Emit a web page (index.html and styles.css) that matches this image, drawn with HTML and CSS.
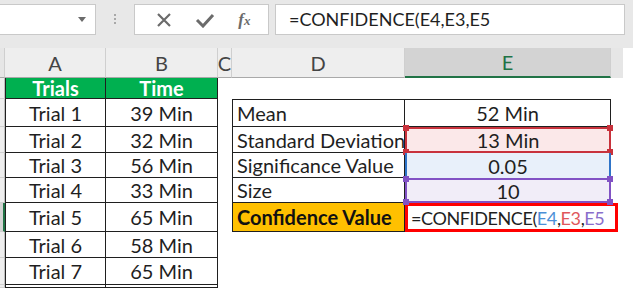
FILE: index.html
```html
<!DOCTYPE html>
<html lang="en">
<head>
  <meta charset="UTF-8" />
  <title>Confidence Value</title>
  <link rel="stylesheet" href="styles.css">
</head>
<body>
  <div class="topbar">
    <div class="namebox"><span class="caret"></span></div>
    <div class="grip"><i></i><i></i><i></i></div>
    <div class="buttons">
      <svg class="icon" width="16" height="16" viewBox="0 0 16 16"><path d="M2 2L14 14M14 2L2 14" stroke="#6b6b6b" stroke-width="2.2" fill="none"/></svg>
      <svg class="icon" width="20" height="16" viewBox="0 0 20 16"><path d="M2 8L8 14L18 3" stroke="#6b6b6b" stroke-width="3" fill="none"/></svg>
      <span class="fx">f<small>x</small></span>
    </div>
    <div class="formula">=CONFIDENCE(E4,E3,E5</div>
  </div>

  <div class="sheet">
    <!-- column headers -->
    <div class="ch corner"></div>
    <div class="ch">A</div>
    <div class="ch">B</div>
    <div class="ch">C</div>
    <div class="ch">D</div>
    <div class="ch selected">E</div>
    <div class="ch rest"></div>

    <div class="rh"></div>
    <div class="cell a head">Trials</div>
    <div class="cell b head">Time</div>
    <div class="cell"></div>
    <div class="cell"></div>
    <div class="cell"></div>

    <div class="rh"></div>
    <div class="cell a">Trial 1</div>
    <div class="cell b">39 Min</div>
    <div class="cell"></div>
    <div class="cell d first">Mean</div>
    <div class="cell e first">52 Min</div>

    <div class="rh"></div>
    <div class="cell a">Trial 2</div>
    <div class="cell b">32 Min</div>
    <div class="cell"></div>
    <div class="cell d">Standard Deviation</div>
    <div class="cell e ref-red">13 Min
      <span class="knob tl"></span><span class="knob tr"></span><span class="knob bl"></span><span class="knob br"></span>
    </div>

    <div class="rh"></div>
    <div class="cell a">Trial 3</div>
    <div class="cell b">56 Min</div>
    <div class="cell"></div>
    <div class="cell d">Significance Value</div>
    <div class="cell e ref-blue">0.05</div>

    <div class="rh"></div>
    <div class="cell a">Trial 4</div>
    <div class="cell b">33 Min</div>
    <div class="cell"></div>
    <div class="cell d">Size</div>
    <div class="cell e ref-purple">10
      <span class="knob tl"></span><span class="knob tr"></span><span class="knob bl"></span><span class="knob br"></span>
    </div>

    <div class="rh active"></div>
    <div class="cell a">Trial 5</div>
    <div class="cell b">65 Min</div>
    <div class="cell"></div>
    <div class="cell d label">Confidence Value</div>
    <div class="cell editing">=CONFIDENCE(<span class="r-blue">E4</span>,<span class="r-red">E3</span>,<span class="r-purple">E5</span></div>

    <div class="rh"></div>
    <div class="cell a">Trial 6</div>
    <div class="cell b">58 Min</div>

    <div class="rh"></div>
    <div class="cell a">Trial 7</div>
    <div class="cell b">65 Min</div>

    <div class="rh"></div>
    <div class="cell a"></div>
    <div class="cell b"></div>
  </div>
</body>
</html>
```

FILE: styles.css
```css
body {
  margin: 0;
  background-color: #ffffff;
  font-family: Lato, "Open Sans", sans-serif;
  color: #1f1f1f;
  width: 633px;
  height: 288px;
  overflow: hidden;
}

/* formula bar */
.topbar {
  height: 48px;
  background-color: #e8e8e8;
  display: flex;
  align-items: flex-start;
  padding-top: 4px;
  box-sizing: border-box;
}

.namebox,
.buttons,
.formula {
  height: 31px;
  background-color: #ffffff;
  border: 1px solid #c9c9c9;
  box-sizing: border-box;
}

.namebox {
  width: 97px;
  margin-left: -1px;
  position: relative;
}

.caret {
  position: absolute;
  right: 9px;
  top: 12px;
  border-left: 4px solid transparent;
  border-right: 4px solid transparent;
  border-top: 5px solid #6b6b6b;
}

.grip {
  width: 38px;
  display: flex;
  flex-direction: column;
  align-items: center;
  gap: 2px;
  padding-top: 10px;
}

.grip i {
  width: 2px;
  height: 2px;
  background-color: #a8a8a8;
}

.buttons {
  width: 135px;
  display: flex;
  align-items: center;
  justify-content: space-around;
  padding: 0 6px 0 10px;
}

.fx {
  font-family: "Liberation Serif", serif;
  font-style: italic;
  font-weight: bold;
  font-size: 17px;
  color: #6b6b6b;
}

.fx small {
  font-size: 13px;
}

.formula {
  width: 350px;
  margin-left: 6px;
  font-size: 18px;
  line-height: 29px;
  padding-left: 13px;
}

/* worksheet */
.sheet {
  display: grid;
  grid-template-columns: 5px 101px 112px 14px 173px 206px 1fr;
  grid-template-rows: 30px 21px 28px 26px 25px 25px 29px 26px 27px 3px;
}

.ch {
  background-color: #eeeeee;
  border-right: 1px solid #cfcfcf;
  border-bottom: 1px solid #a9a9a9;
  color: #444444;
  font-size: 20px;
  display: flex;
  align-items: center;
  justify-content: center;
}

.ch.corner {
  background-color: #e6e6e6;
}

.ch.selected {
  background-color: #d3d3d3;
  border-bottom: 2px solid #217346;
  color: #217346;
}

.ch.rest {
  border: none;
  background: linear-gradient(to right, #e6e6e6 12px, #ffffff 12px);
}

.rh {
  grid-column: 1;
  background-color: #eeeeee;
  border-bottom: 1px solid #cfcfcf;
  border-right: 1px solid #bdbdbd;
}

.rh.active {
  background-color: #d3d3d3;
  border-right: 2px solid #217346;
}

.cell {
  font-size: 20px;
  display: flex;
  align-items: center;
  justify-content: center;
  white-space: nowrap;
  box-sizing: border-box;
}

.cell.a {
  border-left: 1px solid #1f1f1f;
  border-right: 1px solid #1f1f1f;
  border-bottom: 1px solid #1f1f1f;
}

.cell.b {
  border-right: 1px solid #1f1f1f;
  border-bottom: 1px solid #1f1f1f;
}

.cell.head {
  background-color: #00b050;
  color: #ffffff;
  font-weight: bold;
}

.cell.d {
  justify-content: flex-start;
  padding-left: 4px;
  border-left: 1px solid #1f1f1f;
  border-right: 1px solid #1f1f1f;
  border-bottom: 1px solid #1f1f1f;
}

.cell.e {
  border-right: 1px solid #1f1f1f;
  border-bottom: 1px solid #1f1f1f;
  position: relative;
}

.cell.first {
  border-top: 1px solid #1f1f1f;
}

.cell.label {
  background-color: #ffc000;
  font-weight: bold;
  color: #111111;
}

/* formula reference highlights */
.cell.ref-red {
  background-color: #fbe8e9;
  border: 2px solid #c8323c;
}

.cell.ref-blue {
  background-color: #e8f0fa;
  border-left: 2px solid #2f74c8;
  border-right: 2px solid #2f74c8;
  border-bottom: none;
}

.cell.ref-purple {
  background-color: #f1edf8;
  border: 2px solid #8152c4;
}

.knob {
  position: absolute;
  width: 6px;
  height: 6px;
}

.ref-red .knob { background-color: #c8323c; }
.ref-purple .knob { background-color: #8152c4; }

.knob.tl { left: -4px; top: -4px; }
.knob.tr { right: -4px; top: -4px; }
.knob.bl { left: -4px; bottom: -4px; }
.knob.br { right: -4px; bottom: -4px; }

.cell.editing {
  border: 3px solid #ff0000;
  margin-right: -7px;
  justify-content: flex-start;
  padding-left: 3px;
  font-size: 18px;
  letter-spacing: -0.4px;
  color: #1f1f1f;
}

.r-blue { color: #4b8fd6; }
.r-red { color: #e0575b; }
.r-purple { color: #8a6ecb; }
```
